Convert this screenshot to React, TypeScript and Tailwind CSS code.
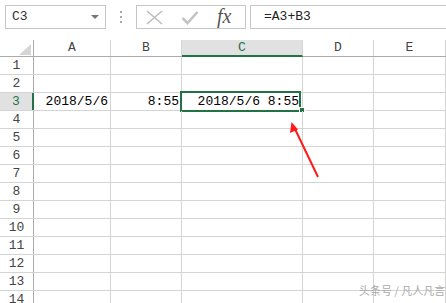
import React from 'react';

const cols = ['A', 'B', 'C', 'D', 'E'];
const colW = ['w-[77px]', 'w-[71px]', 'w-[121px]', 'w-[71px]', 'flex-1'];
const rows = Array.from({ length: 14 }, (_, i) => i + 1);

const mono = { fontFamily: '"Liberation Mono", "DejaVu Sans Mono", monospace' };

const App: React.FC = () => {
  return (
    <div className="w-[446px] h-[303px] overflow-hidden bg-white relative" style={mono}>
      {/* formula bar */}
      <div className="flex items-start h-[40px] pt-[5px] pl-[5px]">
        <div className="w-[101px] h-[24px] border border-[#c6c6c6] flex items-center justify-between pl-[6px] pr-[6px] text-[13px] text-[#333]">
          <span>C3</span>
          <span className="w-0 h-0 border-l-[4px] border-r-[4px] border-t-[4px] border-l-transparent border-r-transparent border-t-[#777]" />
        </div>
        <div className="w-[30px] h-[24px] flex flex-col items-center justify-center gap-[3px]">
          <span className="w-[2px] h-[2px] bg-[#aaa]" />
          <span className="w-[2px] h-[2px] bg-[#aaa]" />
          <span className="w-[2px] h-[2px] bg-[#aaa]" />
        </div>
        <div className="w-[110px] h-[24px] border border-[#c6c6c6] flex items-center pl-[9px] gap-[18px]">
          <svg width="17" height="15" viewBox="0 0 17 15">
            <path d="M1 1 L16 14 M16 1 L1 14" stroke="#bdbdbd" strokeWidth="1.6" fill="none" />
          </svg>
          <svg width="18" height="15" viewBox="0 0 18 15">
            <path d="M1.5 8 L6.5 13 L16.5 2" stroke="#c4c4c4" strokeWidth="2.6" fill="none" />
          </svg>
          <span
            className="text-[20px] italic text-[#555] leading-none -mt-[2px]"
            style={{ fontFamily: '"Liberation Serif", "DejaVu Serif", serif' }}
          >
            fx
          </span>
        </div>
        <div className="ml-[4px] flex-1 h-[24px] border border-r-0 border-[#c6c6c6] flex items-center pl-[13px] text-[13px] text-[#222]">
          =A3+B3
        </div>
      </div>

      {/* column headers */}
      <div className="flex h-[17px] border-b border-[#ababab]">
        <div className="w-[34px] border-r border-[#ababab] relative">
          <svg className="absolute right-[2px] bottom-[1px]" width="12" height="11" viewBox="0 0 12 11">
            <path d="M12 0 L12 11 L0 11 Z" fill="#d5d5d5" />
          </svg>
        </div>
        {cols.map((c, i) => (
          <div
            key={c}
            className={`${colW[i]} shrink-0 flex items-center justify-center text-[13px] border-r border-[#d4d4d4] ${
              c === 'C' ? 'bg-[#e1e1e1] text-[#217346] border-b-2 border-b-[#217346] -mb-[1px]' : 'text-[#444]'
            }`}
          >
            {c}
          </div>
        ))}
      </div>

      {/* rows */}
      {rows.map((r) => (
        <div key={r} className="flex h-[18px] border-b border-[#d4d4d4]">
          <div
            className={`w-[34px] shrink-0 flex items-center justify-center text-[13px] ${
              r === 3
                ? 'bg-[#e1e1e1] text-[#217346] border-r-2 border-[#217346]'
                : 'text-[#444] border-r border-[#ababab]'
            }`}
          >
            {r}
          </div>
          {cols.map((c, i) => (
            <div
              key={c}
              className={`${colW[i]} shrink-0 relative flex items-center justify-end pr-[2px] text-[13px] text-black border-r border-[#d4d4d4]`}
            >
              {r === 3 && c === 'A' && <span>2018/5/6</span>}
              {r === 3 && c === 'B' && <span>8:55</span>}
              {r === 3 && c === 'C' && (
                <>
                  <span className="pr-[1px]">2018/5/6 8:55</span>
                  <div className="absolute -left-[2px] -top-[2px] w-[121px] h-[21px] border-2 border-[#217346]" />
                  <div className="absolute -right-[3px] -bottom-[3px] w-[6px] h-[6px] bg-[#217346] border border-white" />
                </>
              )}
            </div>
          ))}
        </div>
      ))}

      {/* annotation arrow */}
      <svg className="absolute left-0 top-0 pointer-events-none" width="446" height="303">
        <line x1="318" y1="177" x2="295" y2="129" stroke="#ff1a1a" strokeWidth="2" />
        <path d="M291.5 122 L290 133 L298 129.5 Z" fill="#ff1a1a" />
      </svg>

      {/* watermark */}
      <div
        className="absolute left-[359px] top-[283px] whitespace-nowrap text-[11px] leading-[14px] text-[#aaaaaa]"
        style={{ fontFamily: '"Noto Sans CJK SC", "Noto Sans", sans-serif' }}
      >
        头条号 / 凡人凡言
      </div>
    </div>
  );
};

export default App;
